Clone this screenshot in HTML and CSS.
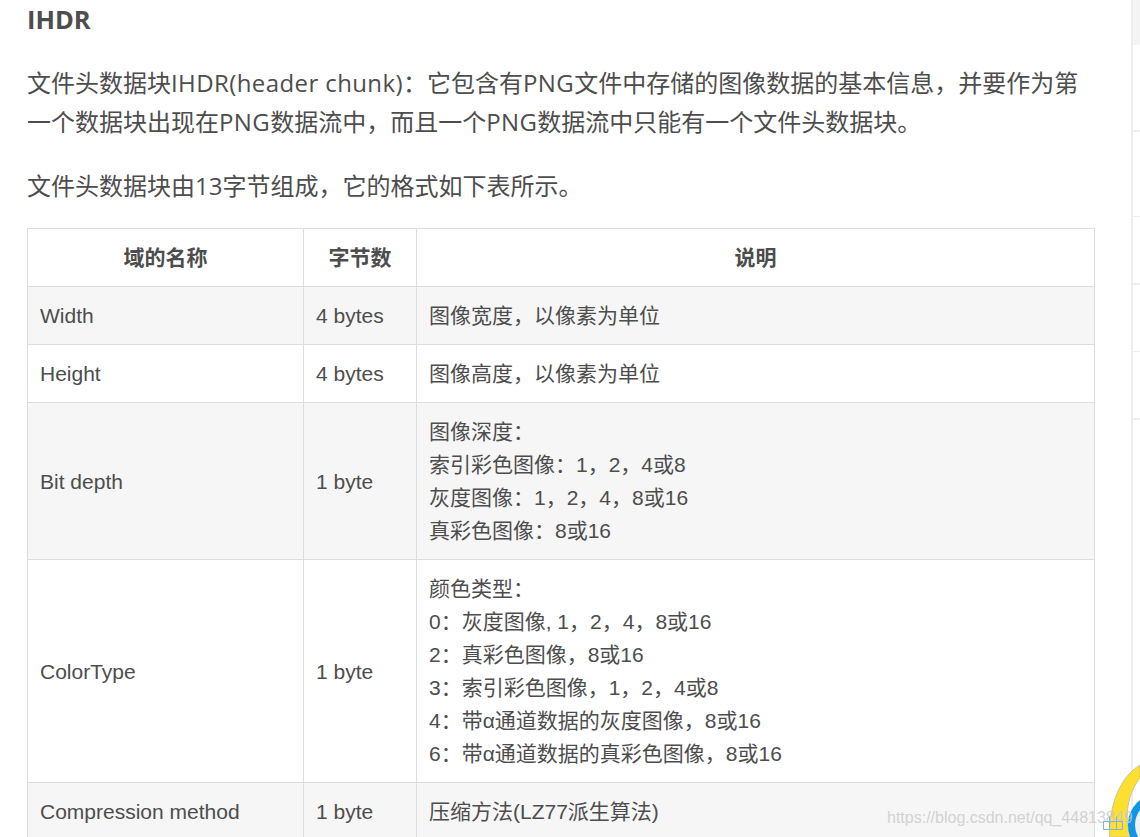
FILE: index.html
```html
<!DOCTYPE html>
<html lang="zh-CN">
<head>
<meta charset="utf-8">
<title>IHDR</title>
<link rel="stylesheet" href="styles.css">
</head>
<body>
<div class="page">
  <main class="article">
    <h4 class="heading">IHDR</h4>
    <p class="para">文件头数据块<span class="wide">IHDR(header chunk)</span>：它包含有<span class="wide">PNG</span>文件中存储的图像数据的基本信息，并要作为第一个数据块出现在<span class="wide">PNG</span>数据流中，而且一个<span class="wide">PNG</span>数据流中只能有一个文件头数据块。</p>
    <p class="para">文件头数据块由13字节组成，它的格式如下表所示。</p>
    <table class="spec">
      <colgroup><col class="c1"><col class="c2"><col class="c3"></colgroup>
      <thead>
        <tr><th>域的名称</th><th>字节数</th><th>说明</th></tr>
      </thead>
      <tbody>
        <tr><td>Width</td><td>4 bytes</td><td>图像宽度，以像素为单位</td></tr>
        <tr><td>Height</td><td>4 bytes</td><td>图像高度，以像素为单位</td></tr>
        <tr><td>Bit depth</td><td>1 byte</td><td>图像深度：<br>索引彩色图像：1，2，4或8<br>灰度图像：1，2，4，8或16<br>真彩色图像：8或16</td></tr>
        <tr><td>ColorType</td><td>1 byte</td><td>颜色类型：<br>0：灰度图像, 1，2，4，8或16<br>2：真彩色图像，8或16<br>3：索引彩色图像，1，2，4或8<br>4：带α通道数据的灰度图像，8或16<br>6：带α通道数据的真彩色图像，8或16</td></tr>
        <tr><td>Compression method</td><td>1 byte</td><td>压缩方法(LZ77派生算法)</td></tr>
      </tbody>
    </table>
  </main>
  <aside class="rail">
    <div class="rail-top"></div>
    <div class="rail-item r1"></div>
    <div class="rail-item r2"></div>
    <div class="rail-item r3"></div>
    <div class="rail-item r4"></div>
    <div class="rail-item r5"></div>
  </aside>
</div>
<svg class="mascot" width="40" height="72" viewBox="0 0 40 72" aria-hidden="true">
  <path d="M40 0C20 12 9 40 9.500 72H30C24 50 28 28 40 13Z" fill="#fde02f" stroke="#c9c4a0" stroke-width="1"/>
  <circle cx="60" cy="60" r="28.500" fill="#eef0f2" stroke="#0f96e6" stroke-width="7"/>
</svg>
<div class="watermark">https://blog.csdn.net/qq_44813849</div>
<svg class="wm-icon" width="22" height="16" viewBox="0 0 22 16" aria-hidden="true">
  <path d="M1.500 6.500H20.500V14.500H1.500ZM7.500 1.500V14.500M14.500 1.500V14.500" fill="none" stroke="#7fb2e5" stroke-width="1"/>
</svg>
</body>
</html>
```
FILE: styles.css
```css
html, body {
  margin: 0;
  padding: 0;
  height: 837px;
  overflow: hidden;
  background: #fff;
}
body {
  font-family: "Open Sans", "Noto Sans CJK SC", sans-serif;
  color: #4d4d4d;
  position: relative;
}
.page {
  display: flex;
  height: 837px;
  overflow: hidden;
}
.article {
  width: 1067px;
  margin-left: 27px;
  flex: none;
}
.heading {
  margin: 0;
  font-size: 25.500px;
  line-height: 39px;
  font-weight: 700;
}
.para {
  margin: 25px 0 0;
  font-size: 24px;
  line-height: 39px;
}
.heading + .para { margin-top: 24px; }
.wide { letter-spacing: 0.4px; }
.spec {
  margin-top: 23px;
  width: 1067px;
  table-layout: fixed;
  border-collapse: collapse;
  font-family: "Liberation Sans", "Noto Sans CJK SC", sans-serif;
  font-size: 21px;
  line-height: 33px;
}
.c1 { width: 276px; }
.c2 { width: 113px; }
.c3 { width: 678px; }
.spec th, .spec td {
  border: 1px solid #dddddd;
  padding: 12px;
  text-align: left;
}
.spec th {
  text-align: center;
  font-weight: 700;
}
.spec tbody tr:nth-child(odd) { background: #f6f6f6; }
.rail {
  margin-left: 37px;
  flex: 1;
  border-left: 2px solid #eeeeee;
}
.rail-top { height: 45px; background: #f4f4f4; }
.rail-item { border-bottom: 2px solid #eeeeee; }
.r1 { height: 85px; }
.r2 { height: 84px; border-bottom-width: 1px; }
.r3 { height: 66px; }
.r4 { height: 66px; border-bottom-width: 1px; }
.r5 { height: 66px; }
.mascot {
  position: absolute;
  right: 0;
  bottom: 0;
}
.watermark {
  position: absolute;
  left: 887px;
  top: 806px;
  font-family: "Liberation Sans", sans-serif;
  font-size: 16px;
  line-height: 24px;
  color: rgba(200, 200, 200, 0.8);
  white-space: nowrap;
}
.wm-icon {
  position: absolute;
  left: 1102px;
  top: 815px;
}
```
